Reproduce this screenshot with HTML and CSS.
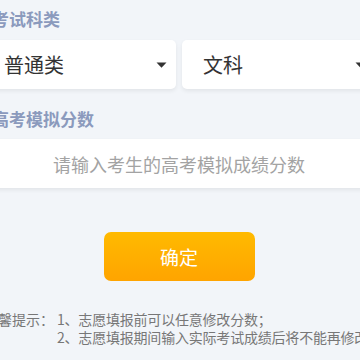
FILE: index.html
```html
<!DOCTYPE html>
<html lang="zh-CN">
<head>
<meta charset="utf-8">
<title>高考模拟分数</title>
<link rel="stylesheet" href="styles.css">
</head>
<body>
<div class="page">
  <div class="label label-first">考试科类</div>
  <div class="select-row">
    <div class="select">
      <span class="select-text">普通类</span>
      <svg class="arrow" width="11" height="6" viewBox="0 0 11 6"><path d="M0.5 0.5 H10.5 L5.5 5.8 Z" fill="#333"/></svg>
    </div>
    <div class="select">
      <span class="select-text">文科</span>
      <svg class="arrow" width="11" height="6" viewBox="0 0 11 6"><path d="M0.5 0.5 H10.5 L5.5 5.8 Z" fill="#333"/></svg>
    </div>
  </div>
  <div class="label label-second">高考模拟分数</div>
  <div class="input-box">
    <input class="score-input" type="text" placeholder="请输入考生的高考模拟成绩分数">
  </div>
  <div class="btn-wrap">
    <div class="btn">确定</div>
  </div>
  <div class="tips">
    <div class="tips-title">温馨提示：</div>
    <div class="tips-list">
      <div class="tips-line">1、志愿填报前可以任意修改分数；</div>
      <div class="tips-line">2、志愿填报期间输入实际考试成绩后将不能再修改</div>
    </div>
  </div>
</div>
</body>
</html>
```
FILE: styles.css
```css
html, body {
  margin: 0;
  padding: 0;
  background: #f2f5f9;
  overflow: hidden;
}
body {
  width: 360px;
  height: 360px;
  font-family: "Noto Sans CJK SC", "Noto Sans", sans-serif;
}
.page {
  width: 392px;
  margin-left: -17px;
  padding-top: 9px;
}
.label {
  font-size: 17px;
  font-weight: bold;
  color: #8b9abd;
  line-height: 20px;
  padding-left: 9px;
}
.select-row {
  display: flex;
  gap: 6px;
  margin-top: 11px;
}
.select {
  width: 193px;
  height: 49px;
  box-sizing: border-box;
  background: #fff;
  border-radius: 5px;
  box-shadow: 0 2px 4px rgba(0, 0, 0, 0.07);
  display: flex;
  align-items: center;
  justify-content: space-between;
  padding: 0 9px 0 21px;
}
.select-text {
  font-size: 20px;
  color: #333;
  line-height: 24px;
}
.arrow {
  display: block;
}
.label-second {
  margin-top: 20px;
}
.input-box {
  margin-top: 10px;
  height: 49px;
  background: #fff;
  box-shadow: 0 2px 4px rgba(0, 0, 0, 0.07);
  display: flex;
  align-items: center;
}
.score-input {
  width: 100%;
  border: none;
  outline: none;
  background: transparent;
  text-align: center;
  font-family: "Noto Sans CJK SC", "Noto Sans", sans-serif;
  font-size: 18px;
  color: #333;
  padding: 0;
}
.score-input::placeholder {
  color: #a3a3a3;
}
.btn-wrap {
  display: flex;
  justify-content: center;
  margin-top: 44px;
}
.btn {
  width: 151px;
  height: 49px;
  border-radius: 7px;
  background: linear-gradient(180deg, #ffba00 0%, #ffa400 100%);
  color: #fff;
  font-size: 19px;
  display: flex;
  align-items: center;
  justify-content: center;
}
.tips {
  display: flex;
  margin-top: 29px;
  font-size: 14px;
  color: #777;
  line-height: 18px;
}
.tips-title {
  width: 71px;
  padding-right: 3px;
  text-align: right;
  flex-shrink: 0;
}
.tips-list {
  white-space: nowrap;
  letter-spacing: -0.2px;
}
```
